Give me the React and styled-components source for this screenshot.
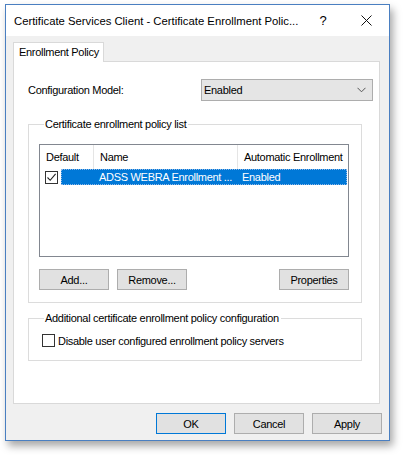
import styled, { createGlobalStyle } from "styled-components";

const Global = createGlobalStyle`
  html, body { margin: 0; padding: 0; background: #ffffff; }
  body {
    font-family: "Liberation Sans", Arial, sans-serif;
    font-size: 11px;
    letter-spacing: -0.3px;
    color: #000;
  }
`;

const Page = styled.div`
  padding: 4px 0 0 5px;
  width: 403px;
  height: 455px;
  box-sizing: border-box;
`;

const Window = styled.div`
  width: 385px;
  height: 437px;
  box-sizing: border-box;
  border: 1.5px solid #4a7fc1;
  background: #f0f0f0;
  box-shadow: 3px 5px 8px rgba(0, 0, 0, 0.35);
  display: flex;
  flex-direction: column;
`;

const TitleBar = styled.div`
  height: 31px;
  background: #ffffff;
  display: flex;
  align-items: center;
  padding: 0 0 0 8px;
`;

const Title = styled.div`
  flex: 1;
  white-space: nowrap;
  font-size: 11.3px;
  letter-spacing: 0;
`;

const TitleButton = styled.div`
  width: ${(p) => p.w}px;
  height: 31px;
  display: flex;
  align-items: center;
  justify-content: center;
  font-size: 13px;
`;

const Body = styled.div`
  flex: 1;
  padding: 6px 9px 0 7px;
  display: flex;
  flex-direction: column;
`;

const TabStrip = styled.div`
  display: flex;
  margin-bottom: -1px;
  position: relative;
  z-index: 1;
`;

const Tab = styled.div`
  width: 91px;
  height: 20px;
  box-sizing: border-box;
  background: #ffffff;
  border: 1px solid #d9d9d9;
  border-bottom: none;
  padding: 3px 0 0 5px;
  white-space: nowrap;
`;

const Panel = styled.div`
  height: 343px;
  box-sizing: border-box;
  background: #ffffff;
  border: 1px solid #d9d9d9;
  padding: 17px 6px 0 14px;
`;

const ConfigRow = styled.div`
  display: flex;
  align-items: center;
  justify-content: space-between;
`;

const Combo = styled.div`
  width: 172px;
  height: 22px;
  box-sizing: border-box;
  background: #e5e5e5;
  border: 1px solid #adadad;
  display: flex;
  align-items: center;
  justify-content: space-between;
  padding: 0 6px 0 2px;
`;

const Group = styled.fieldset`
  margin: ${(p) => p.top}px 11px 0 0;
  padding: 0 ${(p) => p.padRight}px ${(p) => p.padBottom}px 10px;
  border: 1px solid #dcdcdc;
  min-width: 0;
`;

const Legend = styled.legend`
  padding: 0 2px 0 1px;
  margin-left: 5px;
  line-height: 14px;
  white-space: nowrap;
`;

const ListView = styled.div`
  margin-top: 13px;
  height: 113px;
  box-sizing: border-box;
  border: 1px solid #828790;
  background: #ffffff;
`;

const HeaderRow = styled.div`
  display: grid;
  grid-template-columns: 54px 144px 1fr;
  height: 24px;
`;

const HeaderCell = styled.div`
  padding-left: 6px;
  display: flex;
  align-items: center;
  border-right: ${(p) => (p.last ? "none" : "1px solid #e5e5e5")};
  white-space: nowrap;
`;

const Row = styled.div`
  display: flex;
  align-items: center;
  height: 16px;
`;

const CheckCell = styled.div`
  width: 21px;
  box-sizing: border-box;
  padding-left: 5px;
  display: flex;
  align-items: center;
`;

const Selection = styled.div`
  flex: 1;
  margin-right: 1px;
  height: 16px;
  background: #0078d7;
  color: #ffffff;
  outline: 1px dotted #8fb8e8;
  outline-offset: -1px;
  display: grid;
  grid-template-columns: 176px 1fr;
  align-items: center;
  white-space: nowrap;
`;

const SelCell = styled.div`
  padding-left: ${(p) => p.pad}px;
`;

const Box = styled.div`
  width: 13px;
  height: 13px;
  flex: none;
  box-sizing: border-box;
  border: 1px solid #333333;
  background: #ffffff;
  display: flex;
  align-items: center;
  justify-content: center;
`;

const ButtonRow = styled.div`
  display: flex;
  gap: 8px;
  margin-top: 12px;
`;

const Spacer = styled.div`
  flex: 1;
`;

const Button = styled.div`
  width: 70px;
  height: 21px;
  box-sizing: border-box;
  background: #e1e1e1;
  border: 1px solid ${(p) => (p.primary ? "#0078d7" : "#adadad")};
  display: flex;
  align-items: center;
  justify-content: center;
  white-space: nowrap;
`;

const CheckRow = styled.div`
  display: flex;
  align-items: center;
  gap: 3px;
  margin: 9px 0 0 3px;
  white-space: nowrap;
`;

const Footer = styled.div`
  display: flex;
  justify-content: flex-end;
  gap: 8px;
  padding: 9px 0 0 0;
  margin-right: -2px;
`;

function Check() {
  return (
    <svg width="11" height="11" viewBox="0 0 11 11">
      <path d="M1.5 5.5 L4.2 8.3 L9.6 1.8" fill="none" stroke="#222" strokeWidth="1.1" />
    </svg>
  );
}

export default function App() {
  return (
    <>
      <Global />
      <Page>
        <Window>
          <TitleBar>
            <Title>Certificate Services Client - Certificate Enrollment Polic...</Title>
            <TitleButton w={40}>?</TitleButton>
            <TitleButton w={46}>
              <svg width="11" height="11" viewBox="0 0 11 11">
                <path d="M0.5 0.5 L10.5 10.5 M10.5 0.5 L0.5 10.5" stroke="#111" strokeWidth="1" />
              </svg>
            </TitleButton>
          </TitleBar>
          <Body>
            <TabStrip>
              <Tab>Enrollment Policy</Tab>
            </TabStrip>
            <Panel>
              <ConfigRow>
                <span>Configuration Model:</span>
                <Combo>
                  <span>Enabled</span>
                  <svg width="9" height="6" viewBox="0 0 9 6">
                    <path d="M0.5 0.8 L4.5 4.8 L8.5 0.8" fill="none" stroke="#555" strokeWidth="1" />
                  </svg>
                </Combo>
              </ConfigRow>

              <Group top={16} padRight={12} padBottom={12}>
                <Legend>Certificate enrollment policy list</Legend>
                <ListView>
                  <HeaderRow>
                    <HeaderCell>Default</HeaderCell>
                    <HeaderCell>Name</HeaderCell>
                    <HeaderCell last>Automatic Enrollment</HeaderCell>
                  </HeaderRow>
                  <Row>
                    <CheckCell>
                      <Box>
                        <Check />
                      </Box>
                    </CheckCell>
                    <Selection>
                      <SelCell pad={38}>ADSS WEBRA Enrollment ...</SelCell>
                      <SelCell pad={5}>Enabled</SelCell>
                    </Selection>
                  </Row>
                </ListView>
                <ButtonRow>
                  <Button>Add...</Button>
                  <Button>Remove...</Button>
                  <Spacer />
                  <Button>Properties</Button>
                </ButtonRow>
              </Group>

              <Group top={8} padRight={10} padBottom={13}>
                <Legend>Additional certificate enrollment policy configuration</Legend>
                <CheckRow>
                  <Box />
                  <span>Disable user configured enrollment policy servers</span>
                </CheckRow>
              </Group>
            </Panel>
            <Footer>
              <Button primary>OK</Button>
              <Button>Cancel</Button>
              <Button>Apply</Button>
            </Footer>
          </Body>
        </Window>
      </Page>
    </>
  );
}
